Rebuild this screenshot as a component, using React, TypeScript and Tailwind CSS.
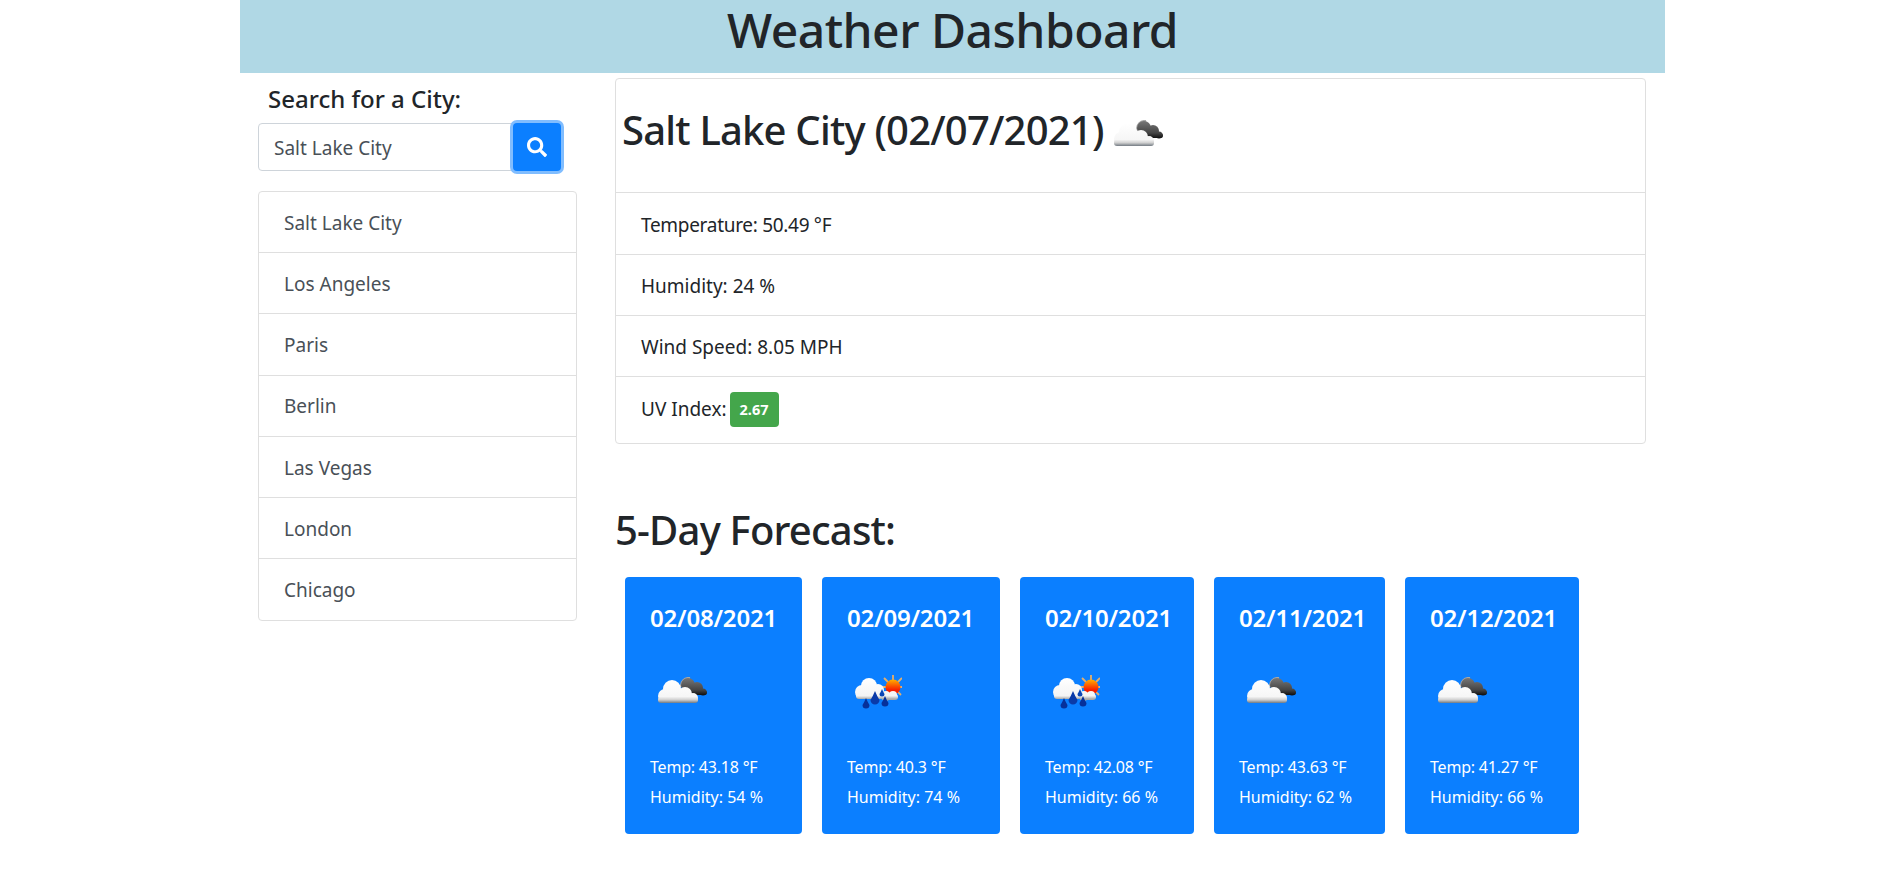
import { FaSearch } from "react-icons/fa";

const cities = ["Salt Lake City", "Los Angeles", "Paris", "Berlin", "Las Vegas", "London", "Chicago"];

const forecast = [
  { date: "02/08/2021", icon: "cloud", temp: "43.18", hum: "54", width: "w-[177px]" },
  { date: "02/09/2021", icon: "rain", temp: "40.3", hum: "74", width: "w-[178px]" },
  { date: "02/10/2021", icon: "rain", temp: "42.08", hum: "66", width: "w-[174px]" },
  { date: "02/11/2021", icon: "cloud", temp: "43.63", hum: "62", width: "w-[171px]" },
  { date: "02/12/2021", icon: "cloud", temp: "41.27", hum: "66", width: "w-[174px]" },
];

function CloudIcon() {
  return (
    <svg width="52" height="27" viewBox="0 0 52 27" className="block">
      <defs>
        <linearGradient id="whiteCloud" gradientUnits="userSpaceOnUse" x1="0" y1="3" x2="0" y2="26">
          <stop offset="0" stopColor="#ffffff" />
          <stop offset="0.72" stopColor="#f6f6f6" />
          <stop offset="0.86" stopColor="#d0d0d0" />
          <stop offset="1" stopColor="#727a82" />
        </linearGradient>
        <linearGradient id="darkCloud" gradientUnits="userSpaceOnUse" x1="0" y1="1" x2="0" y2="18">
          <stop offset="0" stopColor="#777777" />
          <stop offset="0.7" stopColor="#454545" />
          <stop offset="1" stopColor="#111111" />
        </linearGradient>
      </defs>
      <path d="M24 10a8 8 0 0 1 9-9" fill="none" stroke="#a8a8a8" strokeWidth="2" />
      <g fill="url(#darkCloud)">
        <circle cx="31" cy="8" r="7" />
        <circle cx="40" cy="11" r="6" />
        <circle cx="46" cy="15" r="3.500" />
        <rect x="29" y="13" width="21" height="5" rx="2.500" />
      </g>
      <g fill="url(#whiteCloud)">
        <circle cx="8" cy="19" r="7" />
        <circle cx="15" cy="12" r="9" />
        <circle cx="28" cy="17" r="7" />
        <circle cx="36" cy="21" r="5" />
        <rect x="8" y="14" width="24" height="12" />
        <rect x="1" y="20" width="40" height="6" rx="3" />
      </g>
    </svg>
  );
}

function Drop({ x, y, r, fill }: { x: number; y: number; r: number; fill: string }) {
  return <path d={`M${x} ${y - 2 * r}Q${x + r * 0.4} ${y - r} ${x + r} ${y}A${r} ${r} 0 0 1 ${x - r} ${y}Q${x - r * 0.4} ${y - r} ${x} ${y - 2 * r}z`} fill={fill} />;
}

function RainIcon() {
  return (
    <svg width="47" height="34" viewBox="0 0 47 34" className="block">
      <defs>
        <linearGradient id="rainCloud" gradientUnits="userSpaceOnUse" x1="0" y1="3" x2="0" y2="24">
          <stop offset="0" stopColor="#ffffff" />
          <stop offset="0.85" stopColor="#f4f4f4" />
          <stop offset="1" stopColor="#a9a9a9" />
        </linearGradient>
        <linearGradient id="sunFill" gradientUnits="userSpaceOnUse" x1="0" y1="5" x2="0" y2="19">
          <stop offset="0" stopColor="#ffa800" />
          <stop offset="0.7" stopColor="#f72000" />
        </linearGradient>
      </defs>
      <path
        d="M38 0v5M38 19v5M26 12h5M45 12h2M29 3l4 4M47 3l-4 4M46 20l-3-3M30 4l3 3"
        stroke="#e5ae6c"
        strokeWidth="1.800"
      />
      <circle cx="38" cy="12" r="7.500" fill="url(#sunFill)" />
      <g fill="url(#rainCloud)">
        <circle cx="31" cy="21" r="5" />
        <circle cx="38" cy="20" r="4" />
        <rect x="26" y="19" width="17" height="6" rx="3" />
      </g>
      <g fill="url(#rainCloud)">
        <circle cx="7" cy="17" r="7" />
        <circle cx="14" cy="11" r="8" />
        <circle cx="23" cy="15" r="6" />
        <rect x="1" y="17" width="27" height="7" rx="3" />
      </g>
      <Drop x={27} y={19} r={2.5} fill="#0b46b5" />
      <Drop x={20} y={25} r={4.5} fill="#0a3aa8" />
      <Drop x={11} y={30} r={3.5} fill="#06309a" />
      <Drop x={30} y={28} r={3.5} fill="#06309a" />
    </svg>
  );
}

export default function App() {
  return (
    <div className="ml-[240px] w-[1425px] font-['Noto_Sans',sans-serif] text-[#212529]">
      <header className="h-[73px] bg-[#b0d8e5] text-center text-[48px] leading-[60px] font-medium tracking-[-0.5px]">
        Weather Dashboard
      </header>

      <div className="flex">
        {/* Search column */}
        <aside className="ml-[18px] w-[319px] flex-shrink-0">
          <div className="mt-[9px] pl-[10px] text-[24px] leading-[33px] font-medium">Search for a City:</div>
          <div className="mt-[8px] flex items-center">
            <div className="flex h-[48px] w-[254px] items-center rounded-l border border-[#ced4da] pt-[2px] pl-[15px] text-[19px] text-[#495057]">
              Salt Lake City
            </div>
            <button className="ml-[1px] flex h-[48px] w-[48px] items-center justify-center rounded bg-[#0b7fff] text-white ring-3 ring-[#80bdff]">
              <FaSearch className="h-[20px] w-[20px]" />
            </button>
          </div>
          <ul className="mt-[20px] rounded border border-[#dfdfdf]">
            {cities.map((city) => (
              <li
                key={city}
                className="flex h-[61.2px] items-center border-b border-[#dfdfdf] pt-[2px] pl-[25px] text-[19px] text-[#495057] last:border-b-0"
              >
                {city}
              </li>
            ))}
          </ul>
        </aside>

        <main className="ml-[38px] w-[1031px] flex-shrink-0">
          <section className="mt-[5px] rounded border border-[#dfdfdf] text-[19px]">
            <div className="flex h-[114px] items-start border-b border-[#dfdfdf] pt-[26px] pl-[6px]">
              <h2 className="text-[40px] leading-[50px] font-medium tracking-[-0.8px]">Salt Lake City (02/07/2021)</h2>
              <div className="mt-[15px] ml-[9px]">
                <CloudIcon />
              </div>
            </div>
            <div className="flex h-[61.5px] items-center border-b border-[#dfdfdf] pt-[3px] pl-[25px] tracking-[-0.3px]">Temperature: 50.49 °F</div>
            <div className="flex h-[61px] items-center border-b border-[#dfdfdf] pt-[3px] pl-[25px]">Humidity: 24 %</div>
            <div className="flex h-[61px] items-center border-b border-[#dfdfdf] pt-[3px] pl-[25px]">Wind Speed: 8.05 MPH</div>
            <div className="flex h-[66px] items-center pl-[25px]">
              UV Index:
              <span className="ml-[3px] rounded bg-[#44a64b] px-[10px] py-[7px] text-[14.5px] leading-[21px] font-bold text-white">
                2.67
              </span>
            </div>
          </section>

          <h2 className="mt-[59px] text-[40px] leading-[54px] font-medium tracking-[-0.8px]">5-Day Forecast:</h2>

          <div className="mt-[20px] ml-[10px] flex gap-[20px]">
            {forecast.map((day) => (
              <div key={day.date} className={`${day.width} h-[257px] rounded bg-[#0b7fff] pt-[23px] pl-[25px] text-white`}>
                <div className="text-[24px] leading-[36px] font-semibold tracking-[-0.2px]">{day.date}</div>
                {day.icon === "rain" ? (
                  <div className="mt-[39px] ml-[8px] h-[60px]">
                    <RainIcon />
                  </div>
                ) : (
                  <div className="mt-[41px] mb-[-2px] ml-[7px] h-[60px]">
                    <CloudIcon />
                  </div>
                )}
                <div className="mt-[17px] text-[16px] leading-[30px] tracking-[-0.2px]">Temp: {day.temp} °F</div>
                <div className="text-[16px] leading-[30px]">Humidity: {day.hum} %</div>
              </div>
            ))}
          </div>
        </main>
      </div>
    </div>
  );
}
